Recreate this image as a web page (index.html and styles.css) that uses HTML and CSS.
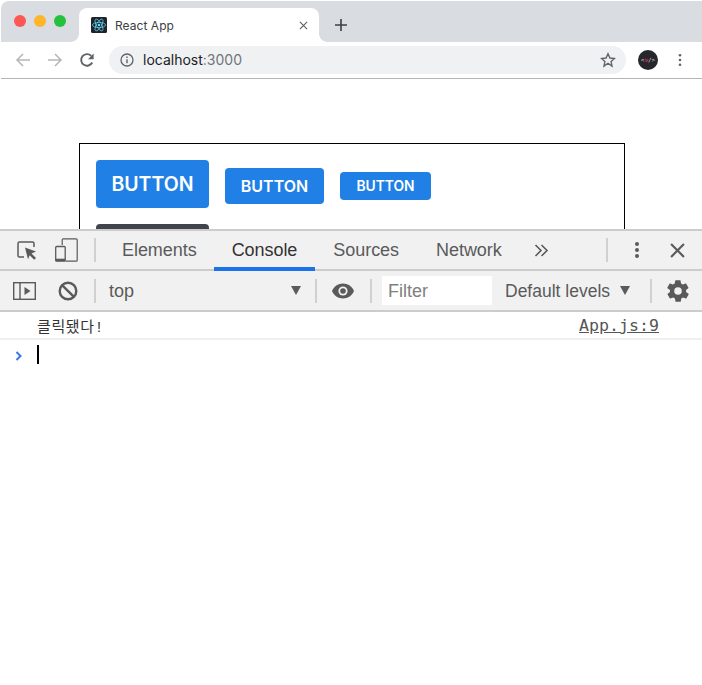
FILE: index.html
```html
<!DOCTYPE html>
<html lang="en">
<head>
<meta charset="utf-8">
<title>React App</title>
<link rel="stylesheet" href="styles.css">
</head>
<body>
<div class="tabstrip">
  <div class="lights"><i class="light red"></i><i class="light amber"></i><i class="light green"></i></div>
  <div class="tab">
    <svg class="favicon" viewBox="0 0 16 16"><rect width="16" height="16" rx="1.5" fill="#20232a"/><g fill="none" stroke="#61dafb" stroke-width=".7"><ellipse cx="8" cy="8" rx="6.6" ry="2.6"/><ellipse cx="8" cy="8" rx="6.6" ry="2.6" transform="rotate(60 8 8)"/><ellipse cx="8" cy="8" rx="6.6" ry="2.6" transform="rotate(120 8 8)"/></g><circle cx="8" cy="8" r="1.3" fill="#61dafb"/></svg>
    <span class="tab-title">React App</span>
    <svg class="tab-close" viewBox="0 0 10 10"><path d="M1 1l8 8M9 1l-8 8" stroke="#5f6368" stroke-width="1.3" fill="none"/></svg>
  </div>
  <svg class="new-tab" viewBox="0 0 12 12"><path d="M6 0v12M0 6h12" stroke="#3c4043" stroke-width="1.6"/></svg>
</div>
<div class="toolbar">
  <svg class="nav" viewBox="0 0 16 16"><path d="M15 8H2M8 2L2 8l6 6" fill="none" stroke="#b4b6b9" stroke-width="1.5"/></svg>
  <svg class="nav" viewBox="0 0 16 16"><path d="M1 8h13M8 2l6 6-6 6" fill="none" stroke="#b4b6b9" stroke-width="1.5"/></svg>
  <svg class="nav" viewBox="0 0 16 16"><path d="M13.2 10.5A5.8 5.8 0 1 1 12.2 3.9" fill="none" stroke="#5f6368" stroke-width="1.9"/><path d="M14.6 1.6v5.6H9z" fill="#5f6368"/></svg>
  <div class="omnibox">
    <svg class="info" viewBox="0 0 14 14"><circle cx="7" cy="7" r="6" fill="none" stroke="#5f6368" stroke-width="1.3"/><path d="M7 6.2v4M7 3.6v1.5" stroke="#5f6368" stroke-width="1.4"/></svg>
    <span class="host">localhost<span class="port">:3000</span></span>
    <svg class="star" viewBox="0 0 16 16"><path d="M8 1.8l1.9 4.2 4.6.5-3.4 3.1.9 4.5L8 11.3l-4 2.8.9-4.5L1.5 6.5l4.6-.5z" fill="none" stroke="#5f6368" stroke-width="1.4"/></svg>
  </div>
  <div class="avatar"><span class="avatar-text">&lt;<span class="avatar-mark">v</span>/&gt;</span></div>
  <svg class="menu" viewBox="0 0 4 14"><circle cx="2" cy="2.2" r="1.3" fill="#5f6368"/><circle cx="2" cy="7" r="1.3" fill="#5f6368"/><circle cx="2" cy="11.8" r="1.3" fill="#5f6368"/></svg>
</div>
<div class="viewport">
  <div class="box">
    <div class="row">
      <button class="btn large">BUTTON</button>
      <button class="btn medium">BUTTON</button>
      <button class="btn small">BUTTON</button>
    </div>
    <div class="row">
      <button class="btn large dark" aria-label="BUTTON"></button>
    </div>
  </div>
</div>
<div class="devtools">
  <div class="dt-tabs">
    <svg class="dt-inspect" viewBox="0 0 22 22"><path d="M8 18H3.500A1.500 1.500 0 0 1 2 16.500v-12A1.500 1.500 0 0 1 3.500 3h13A1.500 1.500 0 0 1 18 4.500V8" fill="none" stroke="#5a5a5a" stroke-width="1.500"/><path d="M9 8.500l11 4-4.500 2 4.500 4.500-1.800 1.800-4.500-4.500-1.700 4z" fill="#5a5a5a"/></svg>
    <svg class="dt-device" viewBox="0 0 23 24"><path d="M7.200 7V1.800a1 1 0 0 1 1-1h13a1 1 0 0 1 1 1v20.400a1 1 0 0 1-1 1H10.500" fill="none" stroke="#5a5a5a" stroke-width="1.200"/><rect x=".7" y="8.500" width="9.500" height="14.700" rx="1" fill="none" stroke="#5a5a5a" stroke-width="1.300"/><rect x=".7" y="20.700" width="9.500" height="2.500" fill="#5a5a5a"/></svg>
    <i class="sep sep-left"></i>
    <span class="dt-tab first">Elements</span>
    <span class="dt-tab active">Console</span>
    <span class="dt-tab third">Sources</span>
    <span class="dt-tab">Network</span>
    <svg class="more" viewBox="0 0 15 13"><path d="M1.500 1l5.500 5.500L1.500 12M7.500 1L13 6.500 7.500 12" fill="none" stroke="#5a5a5a" stroke-width="1.600"/></svg>
    <i class="sep sep-right"></i>
    <svg class="dt-kebab" viewBox="0 0 6 18"><circle cx="3" cy="3" r="2" fill="#5a5a5a"/><circle cx="3" cy="9" r="2" fill="#5a5a5a"/><circle cx="3" cy="15" r="2" fill="#5a5a5a"/></svg>
    <svg class="dt-x" viewBox="0 0 14 14"><path d="M1 1l12 12M13 1L1 13" stroke="#5a5a5a" stroke-width="2"/></svg>
  </div>
  <div class="dt-bar">
    <svg class="dt-sidebar" viewBox="0 0 23 18"><rect x=".7" y=".7" width="21.600" height="16.600" fill="none" stroke="#5a5a5a" stroke-width="1.400"/><path d="M7 .7v16.600" stroke="#5a5a5a" stroke-width="1.400"/><path d="M11.500 5l6 4-6 4z" fill="#5a5a5a"/></svg>
    <svg class="dt-block" viewBox="0 0 20 20"><circle cx="10" cy="10" r="8.300" fill="none" stroke="#5a5a5a" stroke-width="2.400"/><path d="M4.300 4.300l11.400 11.400" stroke="#5a5a5a" stroke-width="2.400"/></svg>
    <i class="sep s1"></i>
    <span class="context">top</span>
    <i class="tri"></i>
    <i class="sep s2"></i>
    <svg class="dt-eye" viewBox="0 0 24 16"><path d="M12 .5C7 .5 2.700 3.600 1 8c1.700 4.400 6 7.500 11 7.500S21.300 12.400 23 8C21.300 3.600 17 .5 12 .5z" fill="#5a5a5a"/><circle cx="12" cy="8" r="4.600" fill="#f1f1f1"/><circle cx="12" cy="8" r="2.800" fill="#5a5a5a"/></svg>
    <i class="sep s3"></i>
    <div class="filter">Filter</div>
    <span class="levels">Default levels</span>
    <i class="tri tri-levels"></i>
    <i class="sep s4"></i>
    <svg class="dt-gear" viewBox="0 0 24 24"><path fill="#5a5a5a" fill-rule="evenodd" d="M19.400 13c.1-.3.100-.7.100-1s0-.7-.1-1l2.100-1.600c.2-.2.200-.4.100-.6l-2-3.500c-.1-.2-.4-.3-.6-.2l-2.500 1c-.5-.4-1.100-.7-1.700-1l-.4-2.600c0-.3-.2-.5-.5-.5h-4c-.3 0-.5.200-.5.500l-.4 2.600c-.6.300-1.200.6-1.700 1l-2.500-1c-.2-.1-.5 0-.6.200l-2 3.500c-.1.200-.1.400.1.600L4.600 11c-.1.300-.1.700-.1 1s0 .7.100 1l-2.100 1.600c-.2.200-.2.400-.1.600l2 3.500c.1.200.4.300.6.200l2.500-1c.5.400 1.100.7 1.700 1l.4 2.600c0 .3.200.5.500.5h4c.3 0 .5-.2.500-.5l.4-2.600c.6-.3 1.200-.6 1.700-1l2.500 1c.2.100.5 0 .6-.2l2-3.500c.1-.2.100-.4-.1-.6zM12 15.500a3.500 3.500 0 1 1 0-7 3.500 3.500 0 0 1 0 7z"/></svg>
  </div>
  <div class="log">
    <span class="log-msg">클릭됐다!</span>
    <span class="log-src">App.js:9</span>
  </div>
  <div class="prompt">
    <svg class="chevron" viewBox="0 0 8 10"><path d="M1.500 1l4 4-4 4" fill="none" stroke="#3b78e7" stroke-width="2"/></svg>
    <i class="caret"></i>
  </div>
</div>
</body>
</html>
```
FILE: styles.css
```css
* { box-sizing: border-box; }
html, body { margin: 0; padding: 0; }
body { width: 702px; height: 685px; background: #fff; overflow: hidden; font-family: "Inter", "Liberation Sans", sans-serif; padding-top: 1px; }
.tabstrip { height: 41px; margin-left: 1px; background: #d9dce1; border-radius: 8px 0 0 0; display: flex; align-items: flex-end; }
.lights { display: flex; gap: 8px; margin: 14px 0 0 13px; width: 65px; flex: none; align-self: flex-start; }
.light { width: 12px; height: 12px; border-radius: 50%; }
.red { background: #fc5753; }
.amber { background: #fdb52a; }
.green { background: #25c03e; }
.tab { width: 240px; height: 34px; background: #fff; border-radius: 8px 8px 0 0; display: flex; align-items: center; padding: 0 12px; position: relative; }
.tab::before, .tab::after { content: ""; position: absolute; bottom: 0; width: 8px; height: 8px; }
.tab::before { left: -8px; background: radial-gradient(circle at 0 0, transparent 7.5px, #fff 8px); }
.tab::after { right: -8px; background: radial-gradient(circle at 100% 0, transparent 7.5px, #fff 8px); }
.favicon { width: 16px; height: 16px; flex: none; }
.tab-title { margin-left: 8px; font-size: 12px; color: #3c4043; flex: 1; letter-spacing: .05px; }
.tab-close { width: 9px; height: 9px; flex: none; margin-right: -1px; }
.new-tab { width: 12px; height: 12px; margin: 0 0 11px 16px; flex: none; }
.toolbar { height: 37px; margin-left: 1px; border-bottom: 1px solid #b5b5b5; display: flex; align-items: center; padding: 0 0 1px 14px; background: #fff; }
.nav { width: 16px; height: 16px; flex: none; margin-right: 16px; }
.nav:nth-child(3) { margin-right: 14px; }
.omnibox { width: 517px; height: 28px; background: #f0f1f3; border-radius: 14px; display: flex; align-items: center; padding: 0 10px 0 11px; }
.info { width: 14px; height: 14px; flex: none; }
.host { margin-left: 9px; font-size: 14px; color: #202124; flex: 1; }
.port { color: #70757a; }
.star { width: 16px; height: 16px; flex: none; }
.avatar { width: 20px; height: 20px; border-radius: 50%; background: #26272a; margin-left: 12px; flex: none; display: flex; align-items: center; justify-content: center; }
.avatar-text { font-size: 6px; color: #d8d8d8; font-family: "DejaVu Sans Mono", monospace; }
.avatar-mark { color: #e0245e; font-weight: 700; }
.menu { width: 4px; height: 14px; margin-left: 20px; flex: none; }
.viewport { height: 150px; overflow: hidden; padding: 64px 0 0 79px; background: #fff; }
.box { width: 546px; border: 1px solid #000; padding: 16px; }
.row { display: flex; align-items: flex-start; gap: 16px; margin-bottom: 16px; }
.btn { border: 0; border-radius: 4px; background: #2080e6; color: #fff; font-family: "Inter", sans-serif; font-weight: 600; padding: 0; display: block; }
.btn.large { width: 113px; height: 48px; font-size: 19.5px; }
.btn.medium { width: 99px; height: 36px; font-size: 16px; margin-top: 8px; }
.btn.small { width: 91px; height: 28px; font-size: 13.800px; margin-top: 12px; }
.btn.dark { background: #40454d; }
.devtools { height: 455px; background: #fff; border-top: 2px solid #ccc; }
.dt-tabs { height: 40px; background: #f1f1f1; border-bottom: 2px solid #ccc; display: flex; align-items: center; font-family: "Liberation Sans", sans-serif; padding-left: 16px; }
.dt-inspect { width: 22px; height: 22px; flex: none; }
.dt-device { width: 23px; height: 24px; flex: none; margin-left: 17px; }
.sep { width: 2px; height: 24px; background: #d0d0d0; flex: none; }
.sep-left { margin-left: 16px; }
.dt-tab { font-size: 18px; color: #5a5a5a; padding: 0 18px; height: 38px; display: flex; align-items: center; flex: none; letter-spacing: -.05px; }
.dt-tab.first { margin-left: 8px; padding-right: 17px; }
.dt-tab.third { padding-right: 19px; }
.dt-tab.active { color: #333; box-shadow: inset 0 -2px 0 #1a73e8, 0 2px 0 #1a73e8; }
.more { width: 15px; height: 13px; margin-left: 14px; flex: none; }
.sep-right { margin-left: 57px; }
.dt-kebab { width: 6px; height: 18px; margin-left: 26px; flex: none; }
.dt-x { width: 15px; height: 15px; margin-left: 30px; flex: none; }
.dt-bar { height: 41px; background: #f1f1f1; border-bottom: 2px solid #ccc; display: flex; align-items: center; padding-left: 13px; font-family: "Liberation Sans", sans-serif; font-size: 18px; color: #5a5a5a; }
.dt-sidebar { width: 23px; height: 18px; flex: none; }
.dt-block { width: 20px; height: 20px; flex: none; margin-left: 22px; }
.s1 { margin-left: 16px; }
.context { margin-left: 13px; width: 182px; flex: none; padding-top: 2px; }
.tri { width: 0; height: 0; border-left: 5px solid transparent; border-right: 5px solid transparent; border-top: 9px solid #5a5a5a; flex: none; }
.s2 { margin-left: 14px; }
.dt-eye { width: 24px; height: 16px; flex: none; margin-left: 14px; }
.s3 { margin-left: 15px; }
.filter { width: 110px; height: 29px; background: #fff; margin-left: 10px; padding-left: 6px; line-height: 31px; color: #808080; flex: none; }
.levels { margin-left: 13px; width: 106px; font-size: 17.5px; white-space: nowrap; flex: none; padding-top: 2px; }
.tri-levels { margin-left: 9px; }
.s4 { margin-left: 20px; }
.dt-gear { width: 26px; height: 26px; margin-left: 13px; flex: none; }
.log { height: 28px; border-bottom: 2px solid #f0f0f0; display: flex; align-items: center; justify-content: space-between; padding: 0 43px 0 37px; font-family: "DejaVu Sans Mono", "Noto Sans CJK KR", monospace; color: #333; }
.log-msg { font-family: "Liberation Mono", "Noto Sans CJK KR", monospace; font-size: 15px; letter-spacing: .6px; padding-top: 2px; }
.log-src { font-size: 16.600px; text-decoration: underline; color: #555; padding-top: 1px; }
.prompt { height: 30px; display: flex; align-items: center; padding-left: 15px; }
.chevron { width: 8px; height: 10px; flex: none; margin-top: 2px; }
.caret { width: 2px; height: 19px; background: #000; margin-left: 14px; flex: none; margin-top: -1px; }
```
